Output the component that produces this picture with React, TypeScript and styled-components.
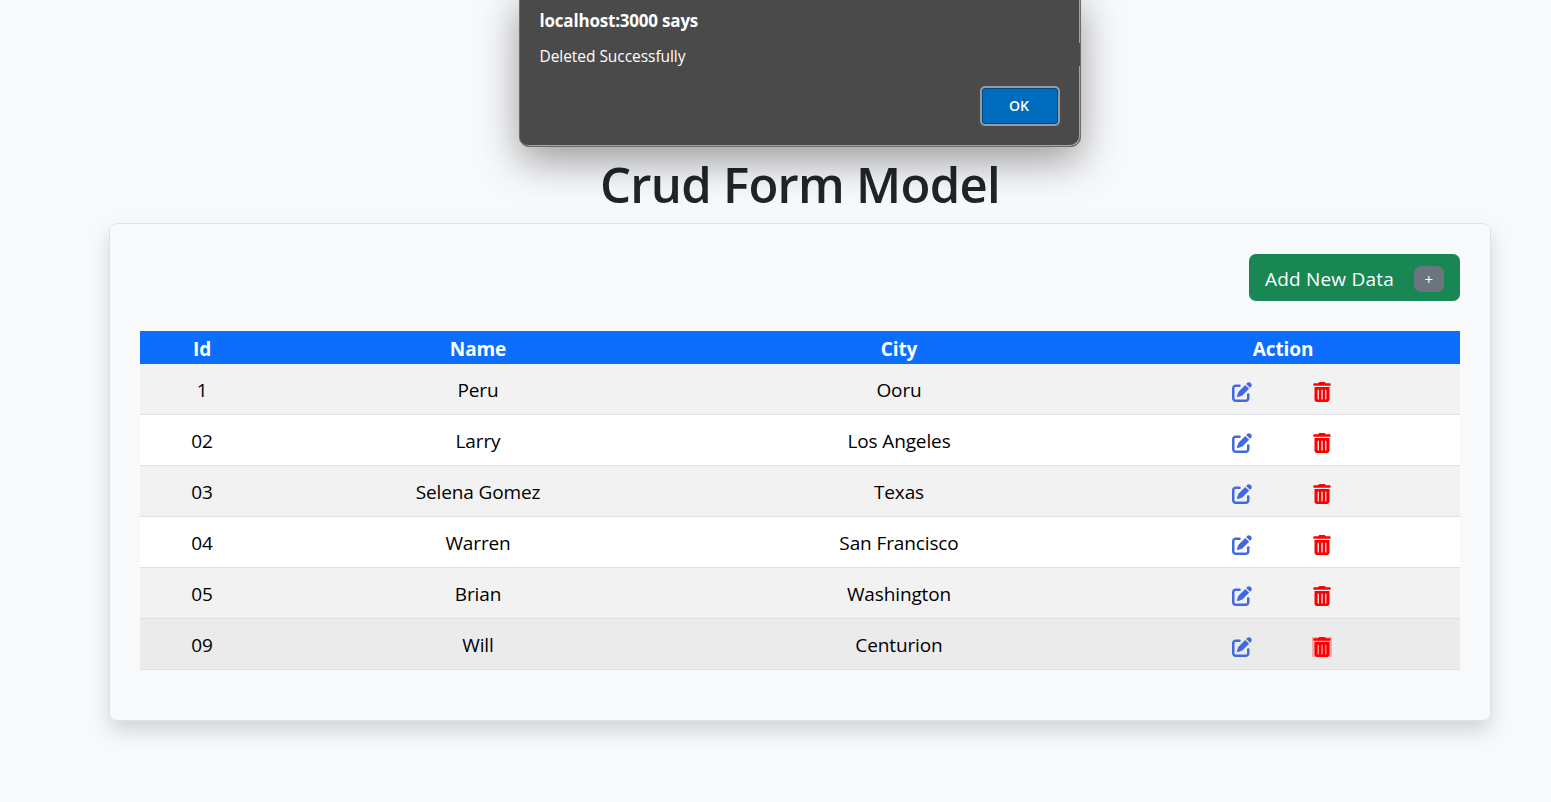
import React from "react";
import styled, { createGlobalStyle } from "styled-components";
import { FaPenToSquare, FaTrashCan } from "react-icons/fa6";

const GlobalStyle = createGlobalStyle`
  *, *::before, *::after { box-sizing: border-box; }
  body {
    margin: 0;
    background: #f8f9fb;
    color: #212529;
    font-family: "Segoe UI", "Open Sans", "Noto Sans", sans-serif;
    font-size: 19px;
    line-height: 30px;
  }
`;

const Page = styled.div`
  position: relative;
  min-height: 802px;
  padding: 154px 60px 0 109px;
  overflow: hidden;
`;

const Title = styled.h1`
  margin: 0 0 9px;
  text-align: center;
  font-size: 49px;
  font-weight: 600;
  line-height: 60px;
  letter-spacing: -0.7px;
`;

const Card = styled.main`
  height: 498px;
  padding: 30px;
  border: 1px solid #dee2e6;
  border-radius: 8px;
  box-shadow: 0 10px 20px rgba(0, 0, 0, 0.15);
`;

const Toolbar = styled.div`
  display: flex;
  justify-content: flex-end;
  margin-bottom: 30px;
`;

const AddButton = styled.button`
  display: flex;
  align-items: center;
  justify-content: space-between;
  width: 211px;
  height: 47px;
  padding: 3px 16px 0;
  border: 0;
  border-radius: 7px;
  background: #198754;
  color: #fff;
  font: inherit;
  letter-spacing: 0.2px;
  white-space: nowrap;
`;

const PlusBadge = styled.span`
  display: flex;
  align-items: center;
  justify-content: center;
  width: 30px;
  height: 26px;
  border-radius: 7px;
  background: #6c757d;
  font-size: 15px;
  line-height: 26px;
`;

const Table = styled.table`
  width: 100%;
  table-layout: fixed;
  border-collapse: separate;
  border-spacing: 0;
  text-align: center;
  color: #000;
`;

const HeadCell = styled.th<{ $width: number }>`
  width: ${(p) => p.$width}px;
  height: 33px;
  padding: 3px 0 0;
  background: #0d6efd;
  color: #fff;
  font-weight: 700;
  letter-spacing: -0.1px;
`;

const Row = styled.tr<{ $tone: string }>`
  background: ${(p) => p.$tone};
`;

const Cell = styled.td`
  height: 51px;
  padding: 1px 0 0;
  border-bottom: 1px solid #dee2e6;
  letter-spacing: -0.12px;
`;

const Actions = styled.div`
  display: flex;
  justify-content: center;
  gap: 60px;
  padding: 5px 2px 0 0;
`;

const IconButton = styled.span<{ $color: string; $active?: boolean }>`
  display: flex;
  width: 20px;
  height: 20px;
  font-size: 20px;
  color: ${(p) => p.$color};
  background: ${(p) => (p.$active ? "#f5acae" : "transparent")};
`;

const Dialog = styled.div`
  position: absolute;
  top: -10px;
  left: 519px;
  width: 562px;
  height: 157px;
  padding: 15px 20px 20px 19.5px;
  display: flex;
  flex-direction: column;
  border: 1px solid #6b6b6b;
  border-radius: 10px;
  background: #4a4a4a;
  color: #fff;
  box-shadow: inset -1px -1px 0 #a3a3a3, 0 14px 40px rgba(0, 0, 0, 0.38);

  &::after {
    content: "";
    position: absolute;
    top: 52px;
    right: 0;
    width: 1px;
    height: 23px;
    background: #4a4a4a;
  }
`;

const DialogTitle = styled.div`
  font-size: 17px;
  font-weight: 700;
  line-height: 29px;
  letter-spacing: -0.2px;
`;

const DialogText = styled.div`
  margin-top: 6px;
  font-size: 15.5px;
  line-height: 30px;
  letter-spacing: -0.05px;
`;

const OkButton = styled.button`
  flex: none;
  align-self: flex-end;
  width: 80px;
  height: 40px;
  margin-top: 15px;
  padding: 0 2px 1px 0;
  border: 2px solid #939ba5;
  border-radius: 5px;
  background: #006cbe;
  box-shadow: inset 0 0 0 1px #004a86;
  color: #fff;
  font: 600 14px "Segoe UI", "Open Sans", "Noto Sans", sans-serif;
`;

const columns = [
  { label: "Id", width: 124 },
  { label: "Name", width: 428 },
  { label: "City", width: 414 },
  { label: "Action", width: 354 },
];

const people = [
  { id: "1", name: "Peru", city: "Ooru" },
  { id: "02", name: "Larry", city: "Los Angeles" },
  { id: "03", name: "Selena Gomez", city: "Texas" },
  { id: "04", name: "Warren", city: "San Francisco" },
  { id: "05", name: "Brian", city: "Washington" },
  { id: "09", name: "Will", city: "Centurion" },
];

const activeId = "09";

function rowTone(id: string, index: number) {
  if (id === activeId) return "#ebebeb";
  return index % 2 === 0 ? "#f2f2f2" : "#ffffff";
}

export default function App() {
  return (
    <>
      <GlobalStyle />
      <Page>
        <Title>Crud Form Model</Title>
        <Card>
          <Toolbar>
            <AddButton>
              Add New Data
              <PlusBadge>+</PlusBadge>
            </AddButton>
          </Toolbar>
          <Table>
            <thead>
              <tr>
                {columns.map((c) => (
                  <HeadCell key={c.label} $width={c.width}>{c.label}</HeadCell>
                ))}
              </tr>
            </thead>
            <tbody>
              {people.map((p, i) => (
                <Row key={p.id} $tone={rowTone(p.id, i)}>
                  <Cell>{p.id}</Cell>
                  <Cell>{p.name}</Cell>
                  <Cell>{p.city}</Cell>
                  <Cell>
                    <Actions>
                      <IconButton $color="#4169e1"><FaPenToSquare /></IconButton>
                      <IconButton $color="#ff0000" $active={p.id === activeId}><FaTrashCan /></IconButton>
                    </Actions>
                  </Cell>
                </Row>
              ))}
            </tbody>
          </Table>
        </Card>
        <Dialog role="alertdialog">
          <DialogTitle>localhost:3000 says</DialogTitle>
          <DialogText>Deleted Successfully</DialogText>
          <OkButton>OK</OkButton>
        </Dialog>
      </Page>
    </>
  );
}
